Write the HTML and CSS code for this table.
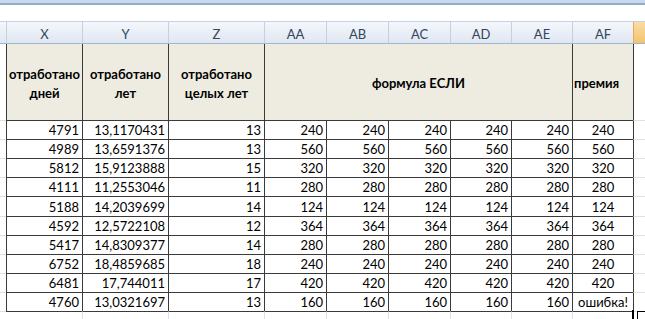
FILE: index.html
```html
<!DOCTYPE html>
<html lang="ru">
<head>
<meta charset="utf-8">
<title>Лист</title>
<link rel="stylesheet" href="styles.css">
</head>
<body>
<div class="ribbon"></div>
<div class="formula"></div>
<div class="colheads">
  <div class="ch"></div>
  <div class="ch">X</div>
  <div class="ch">Y</div>
  <div class="ch">Z</div>
  <div class="ch">AA</div>
  <div class="ch">AB</div>
  <div class="ch">AC</div>
  <div class="ch">AD</div>
  <div class="ch">AE</div>
  <div class="ch">AF</div>
  <div class="ch sel"></div>
</div>
<div class="sheet">
  <div class="edge"></div>
  <div class="th first">отработано<br>дней</div>
  <div class="th">отработано<br>лет</div>
  <div class="th">отработано<br>целых лет</div>
  <div class="th merged">формула ЕСЛИ</div>
  <div class="th left">премия</div>
  <div class="rest"></div>

  <div class="edge"></div><div class="td first">4791</div><div class="td">13,1170431</div><div class="td">13</div><div class="td">240</div><div class="td">240</div><div class="td">240</div><div class="td">240</div><div class="td">240</div><div class="td c">240</div><div class="rest"></div>
  <div class="edge"></div><div class="td first">4989</div><div class="td">13,6591376</div><div class="td">13</div><div class="td">560</div><div class="td">560</div><div class="td">560</div><div class="td">560</div><div class="td">560</div><div class="td c">560</div><div class="rest"></div>
  <div class="edge"></div><div class="td first">5812</div><div class="td">15,9123888</div><div class="td">15</div><div class="td">320</div><div class="td">320</div><div class="td">320</div><div class="td">320</div><div class="td">320</div><div class="td c">320</div><div class="rest"></div>
  <div class="edge"></div><div class="td first">4111</div><div class="td">11,2553046</div><div class="td">11</div><div class="td">280</div><div class="td">280</div><div class="td">280</div><div class="td">280</div><div class="td">280</div><div class="td c">280</div><div class="rest"></div>
  <div class="edge"></div><div class="td first">5188</div><div class="td">14,2039699</div><div class="td">14</div><div class="td">124</div><div class="td">124</div><div class="td">124</div><div class="td">124</div><div class="td">124</div><div class="td c">124</div><div class="rest"></div>
  <div class="edge"></div><div class="td first">4592</div><div class="td">12,5722108</div><div class="td">12</div><div class="td">364</div><div class="td">364</div><div class="td">364</div><div class="td">364</div><div class="td">364</div><div class="td c">364</div><div class="rest"></div>
  <div class="edge"></div><div class="td first">5417</div><div class="td">14,8309377</div><div class="td">14</div><div class="td">280</div><div class="td">280</div><div class="td">280</div><div class="td">280</div><div class="td">280</div><div class="td c">280</div><div class="rest"></div>
  <div class="edge"></div><div class="td first">6752</div><div class="td">18,4859685</div><div class="td">18</div><div class="td">240</div><div class="td">240</div><div class="td">240</div><div class="td">240</div><div class="td">240</div><div class="td c">240</div><div class="rest"></div>
  <div class="edge"></div><div class="td first">6481</div><div class="td">17,744011</div><div class="td">17</div><div class="td">420</div><div class="td">420</div><div class="td">420</div><div class="td">420</div><div class="td">420</div><div class="td c">420</div><div class="rest"></div>
  <div class="edge"></div><div class="td first">4760</div><div class="td">13,0321697</div><div class="td">13</div><div class="td">160</div><div class="td">160</div><div class="td">160</div><div class="td">160</div><div class="td">160</div><div class="td c">ошибка!</div><div class="rest"></div>

  <div class="edge"></div><div class="below first"></div><div class="below"></div><div class="below"></div><div class="below"></div><div class="below"></div><div class="below"></div><div class="below"></div><div class="below"></div><div class="below"></div><div class="rest below-rest"></div>
  <div class="cursor"><div class="cursor-inner"></div></div>
</div>
</body>
</html>
```

FILE: styles.css
```css
* { box-sizing: border-box; }
html, body { margin: 0; padding: 0; }
body {
  width: 645px;
  height: 319px;
  overflow: hidden;
  background: #fff;
  font-family: Lato, "Open Sans", sans-serif;
  font-size: 13px;
  color: #000;
}
.ribbon {
  height: 5px;
  background: #c9d8ec;
  border-bottom: 2px solid #93abcb;
}
.formula { height: 16px; background: #fff; }

.colheads {
  display: grid;
  grid-template-columns: 6px 76px 86px 96px 62px 62px 62px 61px 61px 61px 12px;
  height: 23px;
  border-top: 1px solid #c3d1e3;
  border-bottom: 1px solid #9eb6ce;
}
.ch {
  display: flex;
  align-items: center;
  justify-content: center;
  padding-top: 2px;
  border-left: 1px solid #c2d0e2;
  background: linear-gradient(#f4f7fb, #dfe7f2);
  color: #34455c;
  font-size: 13px;
}
.ch:first-child { border-left: none; }
.ch.sel {
  background: linear-gradient(#fbdca6, #f3c46d);
  border-left: 1px solid #e5ad55;
}

.sheet {
  position: relative;
  display: grid;
  grid-template-columns: 6px 76px 86px 96px 62px 62px 62px 61px 61px 61px 12px;
  grid-template-rows: 76px 19px 19px 19px 19px 20px 19px 19px 19px 19px 19px 20px;
}
.edge {
  border-top: 1px solid #dde2e9;
}
.sheet > .edge:first-child { border-top: none; }
.rest {
  border-left: 1px solid #3a3a3a;
  border-top: 1px solid #dde2e9;
}
.sheet > .rest:nth-child(7) { border-top: none; }
.below-rest { border-left: 1px solid #dde2e9; }

.th {
  background: #eeece1;
  border-left: 1px solid #3a3a3a;
  font-weight: bold;
  text-align: center;
  line-height: 19px;
  display: flex;
  align-items: center;
  justify-content: center;
  padding-top: 3px;
}
.th.merged { grid-column: span 5; }
.th.left { justify-content: flex-start; padding-left: 1px; }

.td {
  border-left: 1px solid #3a3a3a;
  border-top: 1px solid #3a3a3a;
  display: flex;
  align-items: flex-end;
  justify-content: flex-end;
  padding: 0 3px 1px 0;
  line-height: 15px;
  white-space: nowrap;
}
.td.c { justify-content: center; padding-right: 0; }

.below {
  border-top: 1px solid #3a3a3a;
  border-left: 1px solid #dde2e9;
}
.below.first { border-left: none; }

.cursor {
  position: absolute;
  left: 632px;
  top: 266px;
  width: 20px;
  height: 20px;
  border-left: 2px solid #000;
}
.cursor-inner {
  position: absolute;
  left: 3px;
  top: 1px;
  width: 20px;
  height: 20px;
  border-left: 1px solid #000;
  border-top: 1px solid #000;
}
```
